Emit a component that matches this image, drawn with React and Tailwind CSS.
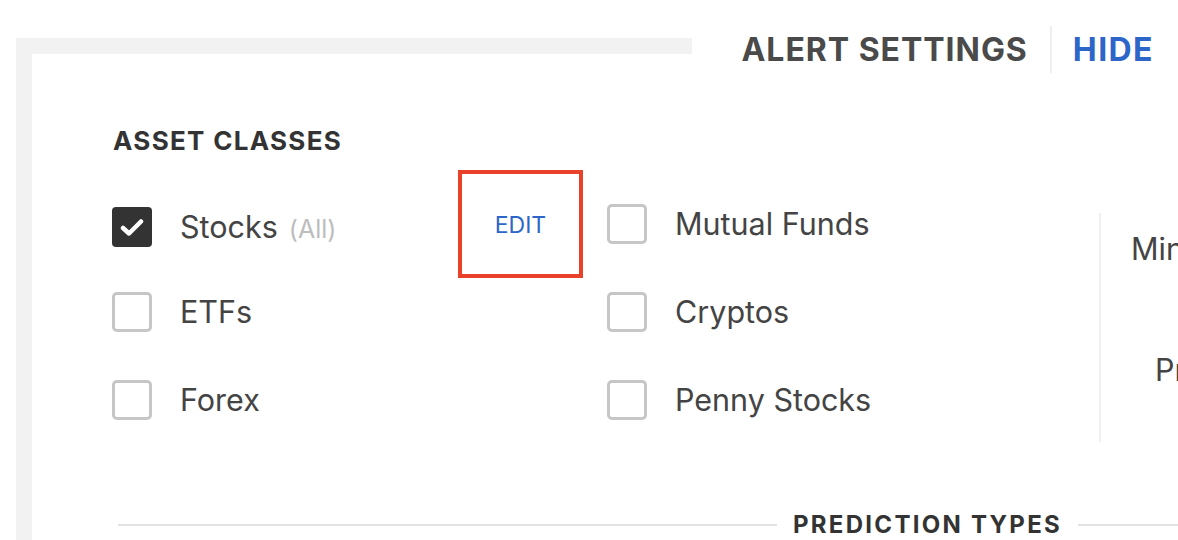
// Alert settings — asset class picker

const ROWS = [
  { left: { label: 'Stocks', note: '(All)', checked: true }, edit: true, right: { label: 'Mutual Funds' } },
  { left: { label: 'ETFs' }, right: { label: 'Cryptos' } },
  { left: { label: 'Forex' }, right: { label: 'Penny Stocks' } },
]

function Check({ checked }) {
  if (checked) {
    return (
      <span className="flex h-[40px] w-[40px] shrink-0 items-center justify-center rounded-[4px] bg-[#333333]">
        <svg width="24" height="19" viewBox="0 0 24 19" fill="none">
          <path d="M3 10 L9 15.5 L21 3.5" stroke="white" strokeWidth="4.5" strokeLinecap="round" strokeLinejoin="round" />
        </svg>
      </span>
    )
  }
  return <span className="block h-[40px] w-[40px] shrink-0 rounded-[5px] border-[3px] border-[#c6c6c6] bg-white" />
}

function Item({ label, note, checked }) {
  return (
    <label className="flex items-center gap-[28px]">
      <Check checked={checked} />
      <span className="whitespace-nowrap text-[30.5px] text-[#444444]">
        {label}
        {note && <span className="ml-[11px] text-[25px] text-[#bdbdbd]">{note}</span>}
      </span>
    </label>
  )
}

export default function App() {
  return (
    <div className="relative h-[540px] w-[1178px] overflow-hidden bg-white font-['Inter','Liberation_Sans',sans-serif]">
      {/* gray frame top strip */}
      <div className="ml-4 pt-[38px]">
        <div className="h-4 w-[676px] bg-[#f2f2f2]" />
      </div>

      {/* header over the panel */}
      <div className="absolute right-[24px] top-[26px] flex h-[47px] items-center">
        <h1 className="pr-[22px] text-[32px] font-bold tracking-[0.03em] text-[#4a4a4a]">ALERT SETTINGS</h1>
        <span className="h-[47px] w-[2px] bg-[#efefef]" />
        <button className="pl-[21px] text-[32px] font-bold tracking-[0.045em] text-[#2d66c9]">HIDE</button>
      </div>

      <div className="ml-4 h-[486px] border-l-[16px] border-[#f2f2f2]">
        <h2 className="pl-[81px] pt-[72px] text-[26px] font-bold leading-[30px] tracking-[0.05em] text-[#333333]">
          ASSET CLASSES
        </h2>

        <div className="mt-[24px] flex pl-[80px]">
          <div className="grid w-[987px] shrink-0 grid-cols-[346px_149px_1fr]">
            {ROWS.map((row, i) => (
              <div key={i} className="contents">
                <div className={`flex h-[88px] items-center ${i === 0 ? 'pt-[6px]' : ''}`}>
                  <Item {...row.left} />
                </div>
                <div className="flex h-[88px] items-center">
                  {row.edit && (
                    <button className="flex h-[108px] w-[125px] items-center justify-center border-[4px] border-[#e8432a] pt-[2px] text-[23px] text-[#2d66c9]">
                      EDIT
                    </button>
                  )}
                </div>
                <div className="flex h-[88px] items-center">
                  <Item {...row.right} />
                </div>
              </div>
            ))}
          </div>

          <span className="mt-[33px] h-[229px] w-[2px] shrink-0 bg-[#f1f1f1]" />
          <div className="flex flex-col pl-[30px] pt-[46px] text-[30.5px] text-[#444444]">
            <span className="whitespace-nowrap">Min</span>
            <span className="mt-[75px] whitespace-nowrap pl-[24px]">Pr</span>
          </div>
        </div>

        <div className="mt-[63px] flex items-center pl-[86px]">
          <span className="h-[2px] w-[659px] shrink-0 bg-[#e3e3e3]" />
          <span className="whitespace-nowrap px-[16px] text-[24px] font-bold tracking-[0.095em] text-[#333333]">
            PREDICTION TYPES
          </span>
          <span className="h-[2px] flex-1 bg-[#e3e3e3]" />
        </div>
      </div>
    </div>
  )
}
